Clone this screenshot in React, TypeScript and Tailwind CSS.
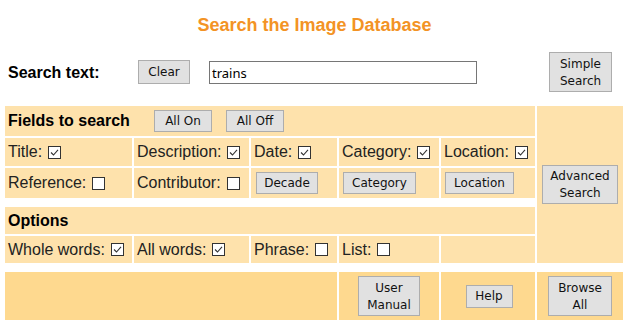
import React from 'react';

// Small Windows-style checkbox drawn as svg
const Box = ({ checked }: { checked?: boolean }) => (
  <svg className="ml-[6px] shrink-0" width="13" height="13" viewBox="0 0 13 13">
    <rect x="0.5" y="0.5" width="12" height="12" fill="#ffffff" stroke="#333333" />
    {checked && <path d="M3 6.5 L5.5 9 L10 3.8" fill="none" stroke="#333333" strokeWidth="1.1" />}
  </svg>
);

const Btn = ({ children, className }: { children: React.ReactNode; className: string }) => (
  <button
    className={
      'flex flex-col items-center justify-center pt-[1px] bg-[#e1e1e1] border border-[#adadad] text-[#111] font-normal text-[12px] leading-[17px] font-["DejaVu_Sans",sans-serif] ' +
      className
    }
  >
    {children}
  </button>
);

const top = 'bg-[#fee2ac] flex items-center pl-[3px]';

const App = () => {
  return (
    <div className="w-[629px] h-[323px] bg-white text-[#222] font-['Liberation_Sans',Arial,sans-serif] text-[16px] overflow-hidden">
      {/* Heading */}
      <div className="h-[52px] pt-[15px] text-center">
        <h1 className="text-[18px] leading-[20px] font-bold text-[#f39325]">Search the Image Database</h1>
      </div>

      {/* Search row */}
      <div className="h-[40px] flex items-center pl-[8px]">
        <div className="w-[130px] pt-[1px] font-bold text-black">Search text:</div>
        <Btn className="w-[52px] h-[24px]">Clear</Btn>
        <input
          readOnly
          value="trains"
          className="ml-[19px] w-[268px] h-[23px] border border-[#767676] px-[2px] pt-[1px] text-[13px] text-black font-['Noto_Sans','DejaVu_Sans',sans-serif] outline-none"
        />
        <Btn className="ml-[72px] w-[63px] h-[40px]">
          <span>Simple</span>
          <span>Search</span>
        </Btn>
      </div>

      {/* Advanced table */}
      <div className="mt-[14px] ml-[5px] grid grid-cols-[127px_115px_86px_100px_94px_86px] grid-rows-[30px_28px_30px_5px_27px_27px_5px_48px] gap-[2px]">
        <div className={top + ' row-start-1 col-start-1 col-span-5 font-bold text-black'}>
          <span className="w-[146px]">Fields to search</span>
          <Btn className="w-[58px] h-[22px]">All On</Btn>
          <Btn className="ml-[14px] w-[58px] h-[22px]">All Off</Btn>
        </div>
        <div className="bg-[#fee2ac] row-start-1 col-start-6 row-span-6 flex items-center justify-center">
          <Btn className="w-[76px] h-[39px]">
            <span>Advanced</span>
            <span>Search</span>
          </Btn>
        </div>

        <div className={top + ' row-start-2 col-start-1'}>Title:<Box checked /></div>
        <div className={top + ' row-start-2 col-start-2'}>Description:<Box checked /></div>
        <div className={top + ' row-start-2 col-start-3'}>Date:<Box checked /></div>
        <div className={top + ' row-start-2 col-start-4'}>Category:<Box checked /></div>
        <div className={top + ' row-start-2 col-start-5'}>Location:<Box checked /></div>

        <div className={top + ' row-start-3 col-start-1'}>Reference:<Box /></div>
        <div className={top + ' row-start-3 col-start-2'}>Contributor:<Box /></div>
        <div className={top + ' row-start-3 col-start-3'}>
          <Btn className="ml-[2px] w-[62px] h-[22px]">Decade</Btn>
        </div>
        <div className={top + ' row-start-3 col-start-4'}>
          <Btn className="ml-[1px] w-[73px] h-[22px]">Category</Btn>
        </div>
        <div className={top + ' row-start-3 col-start-5'}>
          <Btn className="ml-[1px] w-[69px] h-[22px]">Location</Btn>
        </div>

        <div className={top + ' row-start-5 col-start-1 col-span-5 font-bold text-black'}>Options</div>
        <div className={top + ' row-start-6 col-start-1'}>Whole words:<Box checked /></div>
        <div className={top + ' row-start-6 col-start-2'}>All words:<Box checked /></div>
        <div className={top + ' row-start-6 col-start-3'}>Phrase:<Box /></div>
        <div className={top + ' row-start-6 col-start-4'}>List:<Box /></div>
        <div className={top + ' row-start-6 col-start-5'} />

        <div className="bg-[#fed98f] row-start-8 col-start-1 col-span-3" />
        <div className="bg-[#fed98f] row-start-8 col-start-4 flex items-center justify-center">
          <Btn className="w-[62px] h-[40px]">
            <span>User</span>
            <span>Manual</span>
          </Btn>
        </div>
        <div className="bg-[#fed98f] row-start-8 col-start-5 flex items-center justify-center">
          <Btn className="ml-[2px] w-[47px] h-[23px]">Help</Btn>
        </div>
        <div className="bg-[#fed98f] row-start-8 col-start-6 flex items-center justify-center">
          <Btn className="w-[64px] h-[40px]">
            <span>Browse</span>
            <span>All</span>
          </Btn>
        </div>
      </div>
    </div>
  );
};

export default App;
